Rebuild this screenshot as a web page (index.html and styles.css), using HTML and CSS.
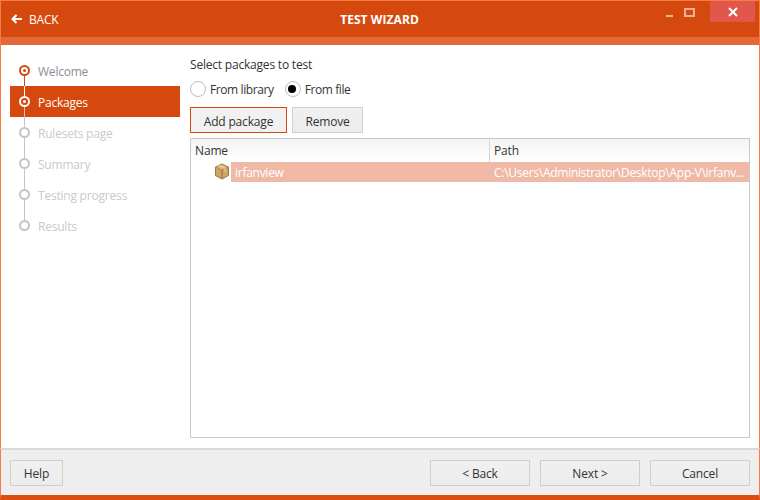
FILE: index.html
```html
<!DOCTYPE html>
<html lang="en">
<head>
<meta charset="utf-8">
<title>Test Wizard</title>
<link rel="stylesheet" href="styles.css">
</head>
<body>
<div class="window">
  <header class="titlebar">
    <div class="back">
      <svg class="back-icon" width="11" height="10" viewBox="0 0 11 10"><path d="M5.500 1 1.500 5l4 4M1.500 5H11" fill="none" stroke="#fff" stroke-width="2"/></svg>
      <span>BACK</span>
    </div>
    <div class="title">TEST WIZARD</div>
    <div class="controls">
      <span class="ctl-min"></span>
      <span class="ctl-max"></span>
      <span class="ctl-close">
        <svg width="10" height="10" viewBox="0 0 10 10"><path d="M1 1l8 8M9 1 1 9" fill="none" stroke="#fff" stroke-width="2"/></svg>
      </span>
    </div>
  </header>
  <div class="stripe"></div>
  <div class="body">
    <nav class="steps">
      <div class="step done"><span class="dot"></span><span class="step-label">Welcome</span></div>
      <div class="step active"><span class="dot"></span><span class="step-label">Packages</span></div>
      <div class="step"><span class="dot"></span><span class="step-label">Rulesets page</span></div>
      <div class="step"><span class="dot"></span><span class="step-label">Summary</span></div>
      <div class="step"><span class="dot"></span><span class="step-label">Testing progress</span></div>
      <div class="step last"><span class="dot"></span><span class="step-label">Results</span></div>
    </nav>
    <main class="main">
      <div class="heading">Select packages to test</div>
      <div class="radios">
        <label class="radio"><span class="radio-mark"></span>From library</label>
        <label class="radio on"><span class="radio-mark"></span>From file</label>
      </div>
      <div class="actions">
        <button class="btn focus add">Add package</button>
        <button class="btn remove">Remove</button>
      </div>
      <div class="table">
        <div class="thead">
          <div class="col-name">Name</div>
          <div class="col-path">Path</div>
        </div>
        <div class="row">
          <div class="cell-icon">
            <svg width="16" height="17" viewBox="0 0 16 17">
              <path d="M8 1 14.500 4v8.500L8 16 1.500 12.500V4z" fill="#cfa468" stroke="#a07a3c"/>
              <path d="M1.500 4 8 7 14.500 4 8 1z" fill="#dcb67c" stroke="#a07a3c" stroke-width=".6"/>
              <path d="M8 7v9" stroke="#8f6e36"/>
              <path d="M4.500 2.500 11 5.500V9" stroke="#f0dcb5" fill="none" stroke-width=".8"/>
            </svg>
          </div>
          <div class="row-fill">
            <div class="cell-name">irfanview</div>
            <div class="cell-path">C:\Users\Administrator\Desktop\App-V\irfanv...</div>
          </div>
        </div>
      </div>
    </main>
  </div>
  <footer class="footer">
    <button class="btn help">Help</button>
    <div class="nav-btns">
      <button class="btn wide">&lt; Back</button>
      <button class="btn wide">Next &gt;</button>
      <button class="btn wide">Cancel</button>
    </div>
  </footer>
</div>
</body>
</html>
```

FILE: styles.css
```css
* { box-sizing: border-box; }
html, body { margin: 0; padding: 0; }
body {
  width: 760px;
  height: 500px;
  overflow: hidden;
  font-family: "Open Sans", "Noto Sans", sans-serif;
  font-size: 12px;
  color: #333;
  background: #fff;
}
.window {
  width: 760px;
  height: 500px;
  display: flex;
  flex-direction: column;
  border: 1px solid #f97a43;
  border-bottom: 0;
}
.titlebar {
  height: 36px;
  flex: none;
  background: #d5490e;
  color: #fff;
  display: grid;
  grid-template-columns: 1fr auto 1fr;
  align-items: center;
}
.back {
  display: flex;
  align-items: center;
  gap: 7px;
  padding-left: 10px;
  letter-spacing: -.2px;
}
.title { font-weight: 700; letter-spacing: .07px; margin-left: -1px; }
.controls {
  justify-self: end;
  align-self: start;
  display: flex;
  align-items: flex-start;
  padding-right: 4px;
}
.ctl-min {
  width: 7px;
  height: 2px;
  margin-top: 14px;
  background: #eeb193;
}
.ctl-max {
  width: 11px;
  height: 9px;
  margin: 7px 0 0 11px;
  border: 2px solid #eeb193;
}
.ctl-close {
  width: 45px;
  height: 21px;
  margin-left: 15px;
  background: #e2574c;
  display: flex;
  align-items: center;
  justify-content: center;
}
.stripe { height: 8px; flex: none; background: #e2693a; }
.body { flex: 1; display: flex; min-height: 0; }
.steps { width: 179px; flex: none; padding: 10px 0 0 9px; }
.step {
  height: 31px;
  display: flex;
  align-items: center;
  padding-left: 28px;
  color: #c9c9c9;
  position: relative;
  letter-spacing: -.22px;
}
.step-label { margin-top: 1px; }
.dot {
  position: absolute;
  left: 9px;
  top: 10px;
  width: 11px;
  height: 11px;
  border: 2px solid #c4c4c4;
  border-radius: 50%;
  background: #fff;
  z-index: 1;
}
.step::after {
  content: "";
  position: absolute;
  left: 14px;
  top: 21px;
  width: 1px;
  height: 21px;
  background: #c4c4c4;
}
.step.last::after { display: none; }
.step.done { color: #8b8f98; }
.step.done .dot { border-color: #d5490e; }
.step.done .dot::after, .step.active .dot::after {
  content: "";
  position: absolute;
  left: 2px;
  top: 2px;
  width: 3px;
  height: 3px;
  border-radius: 50%;
  background: #d5490e;
}
.step.done::after { background: #d5490e; height: 10px; }
.step.active { background: #d5490e; color: #fff; }
.step.active .dot { border-color: #fff; background: #d5490e; }
.step.active .dot::after { background: #fff; }
.step.active::before {
  content: "";
  position: absolute;
  left: 14px;
  top: 0;
  width: 1px;
  height: 10px;
  background: #fff;
}
.main { flex: 1; display: flex; flex-direction: column; padding: 11px 9px 10px 10px; min-width: 0; }
.heading { height: 17px; line-height: 17px; letter-spacing: -.2px; color: #333; }
.radios { display: flex; gap: 11px; margin-top: 8px; height: 16px; }
.radio { display: flex; align-items: center; gap: 4px; letter-spacing: -.4px; color: #333; }
.radio-mark {
  width: 16px;
  height: 16px;
  border: 1.500px solid #bdbdbd;
  border-radius: 50%;
  background: #fff;
  position: relative;
}
.radio.on .radio-mark::after {
  content: "";
  position: absolute;
  left: 2.500px;
  top: 2.500px;
  width: 8px;
  height: 8px;
  border-radius: 50%;
  background: #000;
}
.actions { display: flex; gap: 5px; margin-top: 10px; }
.btn {
  height: 26px;
  padding: 0;
  font: inherit;
  color: #333;
  letter-spacing: -.17px;
  border: 1px solid #cfcfcf;
  background: linear-gradient(#f0f0f0, #ececec);
}
.btn.focus { border-color: #d5490e; background: #f1f1f1; }
.actions .btn { padding-top: 2px; }
.add { width: 97px; }
.remove { width: 71px; }
.table {
  flex: 1;
  margin-top: 5px;
  border: 1px solid #c9c9c9;
  background: #fff;
}
.thead {
  height: 22px;
  display: grid;
  grid-template-columns: 299px 1fr;
  background: linear-gradient(#f3f3f3, #fff);
  line-height: 24px;
}
.col-name { padding-left: 4px; border-right: 1px solid #d6d6d6; letter-spacing: -.15px; }
.col-path { padding-left: 4px; letter-spacing: -.15px; }
.row { display: flex; height: 20px; margin-top: 1px; }
.cell-icon { width: 40px; flex: none; padding-left: 23px; margin-top: 1px; }
.row-fill {
  flex: 1;
  display: grid;
  grid-template-columns: 259px 1fr;
  background: #f0b9a5;
  color: #fff;
  line-height: 22px;
  letter-spacing: -.27px;
}
.cell-name { padding-left: 4px; }
.cell-path { padding-left: 4px; white-space: nowrap; overflow: hidden; }
.footer {
  height: 52px;
  flex: none;
  display: flex;
  justify-content: space-between;
  padding: 10px 9px 0;
  margin: 0 -1px;
  background: #eee;
  border-top: 2px solid #d9d9d9;
  border-bottom: 5px solid #dd4c10;
  border-left: 1px solid #f97a43;
  border-right: 1px solid #f97a43;
}
.help { width: 53px; }
.nav-btns { display: flex; gap: 10px; }
.wide { width: 100px; }
```
